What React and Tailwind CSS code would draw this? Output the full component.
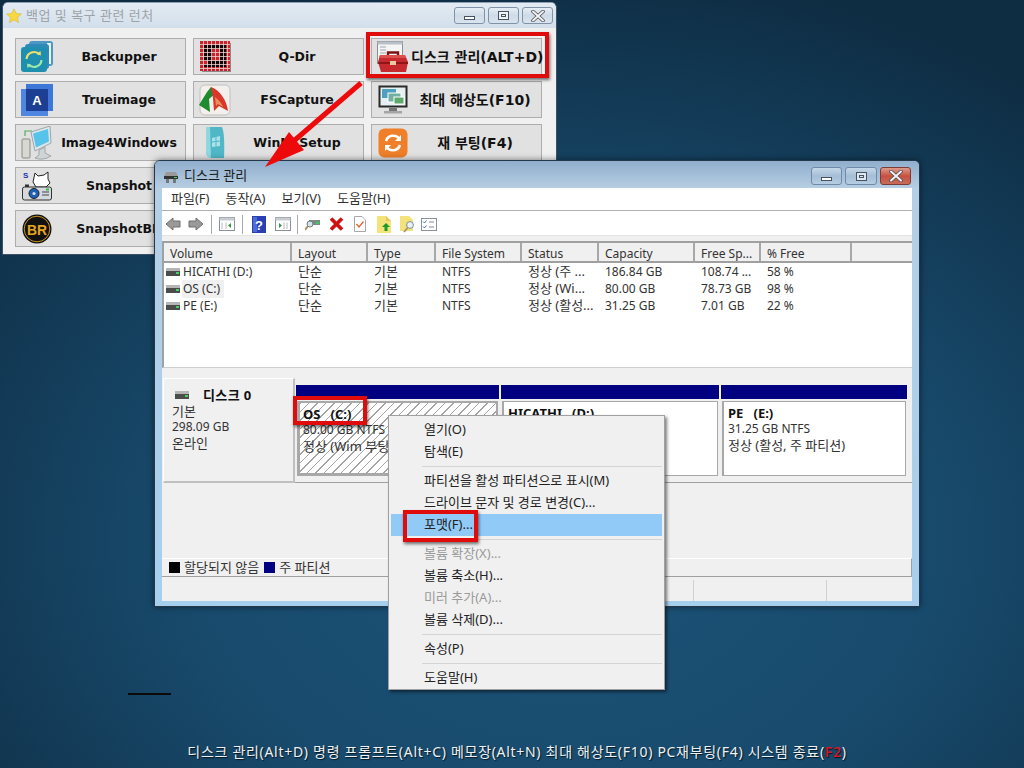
import React from "react";

const sys = "font-['Noto_Sans','Noto_Sans_CJK_KR',sans-serif]";
const hasKo = (s) => /[가-힣]/.test(s);

function Ctl({ kind, w = "w-[31px]", h = "h-[18px]", red = false, pale = false }) {
  const tone = red
    ? "border-[#7d3b35] bg-gradient-to-b from-[#dc9a8e] via-[#c8503f] to-[#c66b58]"
    : pale
    ? "border-[#7f93a8] bg-gradient-to-b from-[#e6eef5] via-[#cfdbe7] to-[#d9e4ee]"
    : "border-[#6f8aa6] bg-gradient-to-b from-[#c6d8e9] via-[#a5bed6] to-[#b5cde2]";
  return (
    <div className={`${w} ${h} rounded-[3px] border flex items-center justify-center ${tone}`}>
      {kind === "min" && <div className="w-[11px] h-[4px] mt-[5px] border border-[#46525e] bg-white" />}
      {kind === "max" && <div className="w-[11px] h-[9px] border-[1.5px] border-[#46525e] bg-white/60 flex items-center justify-center"><div className="w-[5px] h-[3px] border border-[#46525e]" /></div>}
      {kind === "close" && (
        <svg width="14" height="12" viewBox="0 0 14 12">
          <path d="M2 1.5 L12 10.5 M12 1.5 L2 10.5" stroke="#4a4d55" strokeWidth="3.6" strokeLinecap="round" />
          <path d="M2 1.5 L12 10.5 M12 1.5 L2 10.5" stroke="#f2f2f2" strokeWidth="2" strokeLinecap="round" />
        </svg>
      )}
    </div>
  );
}

const Icons = {
  backupper: (
    <svg width="34" height="32" viewBox="0 0 34 32">
      <rect x="9" y="0" width="24" height="25" rx="3" fill="#4d97c6" />
      <rect x="27" y="2" width="4" height="21" fill="#e9f3f8" />
      <rect x="5" y="3" width="24" height="25" rx="3" fill="#2f8ab8" />
      <rect x="1" y="6" width="26" height="25" rx="3" fill="#1f8fb0" />
      <path d="M6.5 18 a7.5 7.5 0 0 1 13 -4.5" fill="none" stroke="#e9e06f" strokeWidth="2.2" />
      <path d="M21 14.5 L20.5 10 L16.5 13 Z" fill="#e9e06f" />
      <path d="M21.5 19 a7.5 7.5 0 0 1 -13 4.5" fill="none" stroke="#9fe8a8" strokeWidth="2.2" />
      <path d="M7 22.5 L7.5 27 L11.5 24 Z" fill="#9fe8a8" />
    </svg>
  ),
  qdir: (
    <svg width="31" height="31" viewBox="0 0 31 31">
      <rect x="2" y="2" width="29" height="29" fill="#8a8a8a" />
      <rect width="30" height="30" fill="#c8222a" />
      <path fillRule="evenodd" d="M4 4H26V26H4Z M12 8V20H20V8Z" fill="#120404" />
      <rect x="4" y="20" width="4" height="3" fill="#c8222a" />
      <path d="M0 3.5H30M0 7.5H30M0 11.5H30M0 15.5H30M0 19.5H30M0 23.5H30M0 27.5H30M3.5 0V30M7.5 0V30M11.5 0V30M15.5 0V30M19.5 0V30M23.5 0V30M27.5 0V30" stroke="#f0d4d4" strokeWidth="0.8" />
    </svg>
  ),
  true: (
    <svg width="32" height="32" viewBox="0 0 32 32">
      <rect x="5" y="0" width="27" height="27" fill="#3d78d8" />
      <rect x="0" y="5" width="27" height="27" fill="#4f86e2" />
      <rect x="5" y="5" width="22" height="22" fill="#1c3f94" />
      <text x="16" y="21" fontSize="13" fontWeight="700" fill="#fff" textAnchor="middle" fontFamily="Liberation Sans">A</text>
    </svg>
  ),
  fs: (
    <svg width="32" height="32" viewBox="0 0 32 32">
      <rect x="1" y="1" width="30" height="30" rx="5" fill="#f2efec" stroke="#c4c0bc" />
      <path d="M0 21 L8 8 L12 3 L17 9 L10 15 L11 28 Z" fill="#1f8a2e" />
      <path d="M12 3 C 21 6 28 17 29 27 L20 22 L15 27 L14 14 Z" fill="#d8372a" />
      <path d="M16 13 C 20 16 23 20 24 23 L19 20 L17 22 Z" fill="#eb8d5b" />
    </svg>
  ),
  i4w: (
    <svg width="32" height="34" viewBox="0 0 32 34">
      <rect x="1" y="13" width="8" height="19" rx="1" fill="#d8d8d2" stroke="#8a8a84" />
      <path d="M4 10 L4 5 L11 5" fill="none" stroke="#5aa95a" strokeWidth="1.2" />
      <path d="M10 6 L29 0 L30 17 L14 25 Z" fill="#dfe6ea" stroke="#9aa6ac" />
      <path d="M12 7.5 L27 3 L28 15.5 L15 21.5 Z" fill="#55c3ea" />
      <path d="M18 24 L24 21 L24 27 L30 30 Q22 35 14 32 L18 29Z" fill="#cfd4d6" stroke="#a0a6a8" />
    </svg>
  ),
  nt: (
    <svg width="22" height="33" viewBox="0 0 22 33">
      <path d="M2 1 H18 Q21 8 20 32 L8 32 Q2 31 2 26 Z" fill="#4fb7c6" />
      <path d="M2 1 H6 L7 32 Q2 31 2 26 Z" fill="#8fd7df" />
      <path d="M8 12 L16 10 L16 20 L8 21 Z" fill="#a9e2e8" />
      <path d="M12 10.5V20.5M8 16L16 15" stroke="#4fb7c6" />
    </svg>
  ),
  snap: (
    <svg width="30" height="30" viewBox="0 0 30 30">
      <text x="1" y="7" fontSize="8" fontWeight="700" fill="#1a2fb0" fontFamily="Liberation Sans">S</text>
      <path d="M13 2 L16 5 L22 4 L26 1 L26 8 L28 12 L24 16 L14 16 L11 11 Z" fill="#fff" stroke="#222" />
      <rect x="0.5" y="16" width="29" height="13" rx="2" fill="#d5d8dc" stroke="#333" />
      <circle cx="12" cy="22.5" r="5" fill="#1e5fb8" stroke="#222" />
      <circle cx="12" cy="22.5" r="1.6" fill="#ddd" />
      <path d="M20 21H27M20 24H27" stroke="#444" />
      <rect x="24" y="17.5" width="3" height="2" fill="#32c040" />
      <rect x="3" y="13.5" width="4" height="2.5" fill="#333" />
    </svg>
  ),
  br: (
    <svg width="30" height="30" viewBox="0 0 30 30">
      <circle cx="15" cy="15" r="14.5" fill="#111" />
      <circle cx="15" cy="15" r="12.8" fill="none" stroke="#c9921c" strokeWidth="1" />
      <text x="15" y="20.5" fontSize="15" fontWeight="700" fill="#e6a51f" textAnchor="middle" fontFamily="Liberation Sans" textLength="20" lengthAdjust="spacingAndGlyphs">BR</text>
    </svg>
  ),
  tool: (
    <svg width="32" height="32" viewBox="0 0 32 32">
      <rect x="0.5" y="0.5" width="25" height="22" fill="#f5f5f5" stroke="#8a8f96" />
      <rect x="0.5" y="0.5" width="25" height="3" fill="#b9c0c8" />
      <path d="M3 6H9M3 9H9M3 12H9M3 15H9" stroke="#a0a6ac" />
      <path d="M11 15V11.5H21V15" fill="none" stroke="#7a1414" strokeWidth="2.4" />
      <path d="M3 14 H28 L31 21 L29 31 H4 L1 21 Z" fill="#c62a2e" />
      <path d="M3 14 H28 L29 17 H2Z" fill="#dd5050" />
      <path d="M1 21 H31 V23 H1.4Z" fill="#8f1517" />
      <rect x="13" y="20" width="6" height="4" fill="#e8c9a0" />
    </svg>
  ),
  res: (
    <svg width="30" height="29" viewBox="0 0 30 29">
      <rect x="0.5" y="0.5" width="29" height="22" fill="#2a2a2a" />
      <rect x="2.5" y="2.5" width="25" height="18" fill="#e5f0f3" />
      <rect x="4" y="4" width="14" height="9" fill="#4f9fc0" />
      <rect x="10" y="8" width="13" height="9" fill="#74b0a0" stroke="#fff" />
      <rect x="16" y="12" width="10" height="7" fill="#5faa6a" stroke="#fff" />
      <rect x="11" y="23" width="8" height="3" fill="#777" />
      <rect x="6" y="26" width="18" height="2.5" fill="#a5a5a5" />
    </svg>
  ),
  reboot: (
    <svg width="30" height="30" viewBox="0 0 30 30">
      <rect x="0.5" y="0.5" width="29" height="29" rx="6" fill="#ef7f28" />
      <path d="M8 13 a7.5 7.5 0 0 1 13 -2.5" fill="none" stroke="#fff" strokeWidth="2.6" />
      <path d="M23 7 V13 H17 Z" fill="#fff" />
      <path d="M22 17 a7.5 7.5 0 0 1 -13 2.5" fill="none" stroke="#fff" strokeWidth="2.6" />
      <path d="M7 23 V17 H13 Z" fill="#fff" />
    </svg>
  ),
  star: (
    <svg width="16" height="16" viewBox="0 0 16 16">
      <path d="M8 .8 L10.2 5.4 L15.4 6 L11.5 9.4 L12.6 14.6 L8 12 L3.4 14.6 L4.5 9.4 L.6 6 L5.8 5.4 Z" fill="#f7d93f" stroke="#d9b645" strokeWidth=".6" />
    </svg>
  ),
};

function Btn({ icon, label }) {
  return (
    <div className="h-[37px] min-w-0 flex items-center border border-[#adadad] bg-[#e1e1e1]">
      <div className="w-[39px] shrink-0 flex items-center justify-center pl-[3px]">{icon}</div>
      <div className={`flex-1 pr-[2px] pt-[2px] text-center whitespace-nowrap font-['DejaVu_Sans','Noto_Sans_CJK_KR',sans-serif] font-semibold ${hasKo(label) ? "text-[14px]" : "text-[12.5px]"} text-[#111]`}>{label}</div>
    </div>
  );
}

function Launcher() {
  return (
    <div className="absolute left-[2px] top-[2px] w-[555px] h-[253px] rounded-t-[6px] border border-[#3c5068] border-t-[#8da0b5] bg-[#f0f0f0] overflow-hidden">
      <div className="h-[25px] flex items-center pl-[3px] pr-[3px] bg-gradient-to-b from-[#e3ebf3] to-[#d2dfeb]">
        {Icons.star}
        <span className={`ml-[4px] text-[13px] text-[#9ea3a8] tracking-[0.5px] ${sys}`}>백업 및 복구 관련 런처</span>
        <div className="ml-auto flex gap-[3px]">
          <Ctl kind="min" pale h="h-[17px]" />
          <Ctl kind="max" pale h="h-[17px]" />
          <Ctl kind="close" pale h="h-[17px]" />
        </div>
      </div>
      <div className="grid grid-cols-[171px_171px_171px] gap-x-[7px] gap-y-[6px] pl-[12px] pt-[10px]">
        <Btn icon={Icons.backupper} label="Backupper" />
        <Btn icon={Icons.qdir} label="Q-Dir" />
        <Btn icon={Icons.tool} label="디스크 관리(ALT+D)" />
        <Btn icon={Icons.true} label="Trueimage" />
        <Btn icon={Icons.fs} label="FSCapture" />
        <Btn icon={Icons.res} label="최대 해상도(F10)" />
        <Btn icon={Icons.i4w} label="Image4Windows" />
        <Btn icon={Icons.nt} label="WinNTSetup" />
        <Btn icon={Icons.reboot} label="재 부팅(F4)" />
        <Btn icon={Icons.snap} label="Snapshot" />
        <div />
        <div />
        <Btn icon={Icons.br} label="SnapshotBR" />
      </div>
    </div>
  );
}

function Drive({ w = 14 }) {
  return (
    <svg width={w} height="8" viewBox="0 0 14 8" className="shrink-0">
      <rect x="0" y="0" width="14" height="3" fill="#b5b5b5" />
      <rect x="0" y="3" width="14" height="5" fill="#4a4d4a" />
      <rect x="10" y="4" width="3" height="2" fill="#45d060" />
    </svg>
  );
}

const TB = {
  back: (
    <svg width="16" height="14" viewBox="0 0 16 14"><path d="M1 7 L8 1 V4 H15 V10 H8 V13 Z" fill="#9a9a9a" stroke="#6f6f6f" /></svg>
  ),
  fwd: (
    <svg width="16" height="14" viewBox="0 0 16 14"><path d="M15 7 L8 1 V4 H1 V10 H8 V13 Z" fill="#9a9a9a" stroke="#6f6f6f" /></svg>
  ),
  tree: (
    <svg width="16" height="14" viewBox="0 0 16 14"><rect x=".5" y=".5" width="15" height="13" fill="#fff" stroke="#8a9198" /><rect x=".5" y=".5" width="15" height="3" fill="#c7ccd2" /><path d="M3 5.5V12M7 5.5V12" stroke="#b8b8b8" /><path d="M12 6 L9 8.5 L12 11 Z" fill="#2e9a4a" /></svg>
  ),
  help: (
    <svg width="14" height="17" viewBox="0 0 14 17"><rect width="14" height="17" fill="#2a3fb4" /><rect x="1" y="1" width="4" height="15" fill="#4c6bd6" /><text x="7" y="13.5" fontSize="13" fontWeight="700" fill="#fff" textAnchor="middle" fontFamily="Liberation Sans">?</text></svg>
  ),
  action: (
    <svg width="16" height="14" viewBox="0 0 16 14"><rect x=".5" y=".5" width="15" height="13" fill="#fff" stroke="#8a9198" /><rect x=".5" y=".5" width="15" height="3" fill="#c7ccd2" /><path d="M9 5.5V12M12 5.5V12" stroke="#b8b8b8" /><path d="M4 6 L7 8.5 L4 11 Z" fill="#2e9a4a" /></svg>
  ),
  conn: (
    <svg width="16" height="14" viewBox="0 0 16 14"><path d="M4 3 H15 V8 H4Z" fill="#7c8a86" /><rect x="11" y="5" width="3" height="2" fill="#36d05a" /><circle cx="5" cy="7" r="3" fill="#cfe6ee" stroke="#6f7a7a" /><path d="M3 9 L0 13" stroke="#a88e5a" strokeWidth="2" /></svg>
  ),
  x: (
    <svg width="15" height="14" viewBox="0 0 15 14"><path d="M2 1.5 L13 12.5 M13 1.5 L2 12.5" stroke="#cc1212" strokeWidth="3.6" /></svg>
  ),
  doc: (
    <svg width="12" height="16" viewBox="0 0 12 16"><path d="M.5 .5 H8 L11.5 4 V15.5 H.5 Z" fill="#fff" stroke="#a8a8a8" /><path d="M2.5 8 L5 11 L9.5 5.5" fill="none" stroke="#e0632f" strokeWidth="1.3" /></svg>
  ),
  up: (
    <svg width="14" height="17" viewBox="0 0 14 17"><path d="M0 0 H9 L14 5 V17 H0Z" fill="#f4e27a" /><path d="M9 0 L14 5 H9Z" fill="#e4c95a" /><path d="M9 7 L13 11 H10.5 V15 H7.5 V11 H5Z" fill="#1b9a2c" /></svg>
  ),
  find: (
    <svg width="15" height="17" viewBox="0 0 15 17"><path d="M0 0 H9 L13 4 V15 H0Z" fill="#f4e27a" /><circle cx="10" cy="9" r="3.4" fill="#e9f3fa" stroke="#7b8a96" /><path d="M7.5 12 L4 16" stroke="#a88e5a" strokeWidth="1.6" /></svg>
  ),
  list: (
    <svg width="16" height="13" viewBox="0 0 16 13"><rect x=".5" y=".5" width="15" height="12" fill="#fff" stroke="#8a9198" /><path d="M2 3.5 L3.5 5 L5.5 2.5M2 8.5 L3.5 10 L5.5 7.5" fill="none" stroke="#3f7fc0" /><path d="M8 4H13M8 9H13" stroke="#8a8a8a" /></svg>
  ),
};

const Sep = () => <div className="w-px h-[19px] bg-[#a9a9a9]" />;

const cols = [
  ["Volume", "w-[128px]"],
  ["Layout", "w-[76px]"],
  ["Type", "w-[68px]"],
  ["File System", "w-[86px]"],
  ["Status", "w-[77px]"],
  ["Capacity", "w-[96px]"],
  ["Free Sp...", "w-[66px]"],
  ["% Free", "w-[91px]"],
];

const rows = [
  ["HICATHI (D:)", "단순", "기본", "NTFS", "정상 (주 ...", "186.84 GB", "108.74 ...", "58 %"],
  ["OS (C:)", "단순", "기본", "NTFS", "정상 (Wi...", "80.00 GB", "78.73 GB", "98 %"],
  ["PE (E:)", "단순", "기본", "NTFS", "정상 (활성...", "31.25 GB", "7.01 GB", "22 %"],
];

function Table() {
  return (
    <div className="h-[127px] shrink-0 border-t-2 border-l-2 border-[#a0a0a0] bg-white border-b border-b-[#d0d0d0]">
      <div className="h-[20px] flex bg-[#f0f0f0] border-b-2 border-[#a0a0a0]">
        {cols.map(([t, w]) => (
          <div key={t} className={`${w} shrink-0 pl-[6px] text-[12px] leading-[22px] text-[#333] border-r-2 border-[#a8a8a8] whitespace-nowrap`}>{t}</div>
        ))}
        <div className="flex-1" />
      </div>
      {rows.map((r, i) => (
        <div key={i} className="h-[17px] flex items-center text-[#333] whitespace-nowrap">
          {r.map((c, j) => (
            <div key={j} className={`${cols[j][1]} shrink-0 ${hasKo(c) ? "text-[13px]" : "text-[12px]"} ${j === 0 ? "pl-[2px] flex items-center" : "pl-[6px]"}`}>
              {j === 0 && <Drive />}
              {j === 0 ? <span className={`ml-[2px] px-[1px] ${i === 1 ? "bg-[#f0f0f0] pr-[4px]" : ""}`}>{c}</span> : c}
            </div>
          ))}
        </div>
      ))}
    </div>
  );
}

function Part({ w, name, size, status, hatch }) {
  return (
    <div className={`${w} shrink-0 h-[98px] flex flex-col`}>
      <div className="h-[14px] bg-[#000080] mb-[2px]" />
      <div className={`h-[75px] ${hatch ? "border-[3px] border-[#a8a8a8] border-t-[2px] border-r-[2px] bg-[repeating-linear-gradient(135deg,#a4a4a4_0,#a4a4a4_1px,#ffffff_1px,#ffffff_6px)] pl-[3px]" : "border border-[#a8a8a8] border-l-2 bg-white pl-[4px]"} mx-[1px] pt-[3px] leading-[16px] text-[12px] text-[#333] whitespace-nowrap overflow-hidden`}>
        <div className="font-bold text-[13px] text-[#111] whitespace-pre">{name}</div>
        {size && <div>{size}</div>}
        {status && <div className="text-[13px]">{status}</div>}
      </div>
    </div>
  );
}

function DiskPanel() {
  return (
    <div className="flex-1 flex flex-col min-h-0 bg-[#f0f0f0]">
      <div className="h-[178px] flex items-start pl-[1px]">
        <div className="w-[132px] h-[105px] bg-[#f0f0f0] border-r-2 border-b-2 border-[#c0c0c0] border-t border-t-white border-l border-l-white shrink-0 pl-[8px] pt-[8px] text-[12px] leading-[16px] text-[#333]">
          <div className="flex items-center pl-[3px] h-[16px]">
            <Drive />
            <span className="ml-[14px] text-[13px] font-bold text-[#111] tracking-[0.4px]">디스크 0</span>
          </div>
          <div className="text-[13px]">기본</div>
          <div>298.09 GB</div>
          <div className="text-[13px]">온라인</div>
        </div>
        <div className="flex-1 h-[105px] border-b border-[#a0a0a0] flex pt-[7px] pl-[1px] gap-[2px]">
          <Part w="w-[203px]" name="OS   (C:)" size="80.00 GB NTFS" status="정상 (Wim 부팅" hatch />
          <Part w="w-[218px]" name="HICATHI   (D:)" />
          <Part w="w-[186px]" name="PE   (E:)" size="31.25 GB NTFS" status="정상 (활성, 주 파티션)" />
        </div>
      </div>
      <div className="flex-1" />
      <div className="h-[19px] flex items-center border-t border-t-white border-b border-b-[#a0a0a0] border-r border-r-[#a0a0a0] pl-[7px] text-[13px] text-[#333]">
        <div className="w-[11px] h-[11px] bg-black mr-[4px]" />
        <span>할당되지 않음</span>
        <div className="w-[11px] h-[11px] bg-[#000080] ml-[5px] mr-[4px]" />
        <span>주 파티션</span>
      </div>
    </div>
  );
}

function DiskWindow() {
  return (
    <div className={`absolute left-[154px] top-[160px] w-[766px] h-[447px] rounded-t-[6px] border border-[#24384c] bg-gradient-to-b from-[#b5cfe5] to-[#a6cfee] shadow-[0_0_6px_rgba(0,0,0,0.5)] flex flex-col px-[7px] pb-[5px] overflow-hidden ${sys}`}>
      <div className="h-[27px] shrink-0 -mx-[7px] pl-[8px] pr-[8px] pt-[3px] flex items-center text-[13px] text-[#1a1a1a] bg-gradient-to-b from-[#90aecd] to-[#b6cee3]">
        <svg width="16" height="14" viewBox="0 0 16 14" className="shrink-0">
          <path d="M3 3 H13 L15 7 H1 Z" fill="#9a9a9a" />
          <rect x="1" y="7" width="14" height="3" fill="#333" />
          <rect x="3" y="10" width="3" height="4" fill="#777" />
          <rect x="10" y="10" width="3" height="4" fill="#777" />
          <rect x="11" y="8" width="3" height="1" fill="#45d060" />
        </svg>
        <span className="ml-[5px]">디스크 관리</span>
        <div className="ml-auto flex gap-[3px]">
          <Ctl kind="min" />
          <Ctl kind="max" w="w-[32px]" />
          <Ctl kind="close" red />
        </div>
      </div>
      <div className="flex-1 min-h-0 flex flex-col bg-[#f0f0f0]">
        <div className="h-[23px] shrink-0 bg-white border-b border-[#b0b0b0] flex items-center pl-[9px] gap-[16px] text-[13px] text-[#333]">
          <span>파일(F)</span><span>동작(A)</span><span>보기(V)</span><span>도움말(H)</span>
        </div>
        <div className="h-[24px] shrink-0 bg-white flex items-center pl-[3px] pt-[2px]">
          <div className="w-[23px]">{TB.back}</div>
          <div className="w-[23px]">{TB.fwd}</div>
          <Sep />
          <div className="w-[30px] pl-[7px]">{TB.tree}</div>
          <Sep />
          <div className="w-[24px] pl-[9px] mr-[8px]">{TB.help}</div>
          <div className="w-[22px]">{TB.action}</div>
          <Sep />
          <div className="w-[23px] pl-[7px] mr-[8px]">{TB.conn}</div>
          <div className="w-[25px]">{TB.x}</div>
          <div className="w-[23px]">{TB.doc}</div>
          <div className="w-[23px]">{TB.up}</div>
          <div className="w-[21px]">{TB.find}</div>
          <div className="w-[16px]">{TB.list}</div>
        </div>
        <div className="h-[6px] shrink-0 bg-[#f0f0f0] border-t border-[#e4e4e4]" />
        <Table />
        <div className="h-[10px] shrink-0 bg-[#f0f0f0]" />
        <DiskPanel />
        <div className="h-[24px] shrink-0 flex bg-[#f0f0f0] pt-[3px] text-[12px]">
          <div className="w-[532px] border-r border-[#d0d0d0]" />
          <div className="w-[133px] border-r border-[#d0d0d0]" />
          <div className="flex-1" />
        </div>
      </div>
    </div>
  );
}

function Item({ t, dim, hi }) {
  return (
    <div className={`h-[22px] ml-[2px] mr-[2px] pl-[33px] flex items-center whitespace-nowrap text-[13px] ${dim ? "text-[#9a9a9a]" : "text-[#222]"} ${hi ? "bg-[#91c9f7]" : ""}`}>{t}</div>
  );
}

const MSep = () => <div className="h-px ml-[33px] mr-[2px] my-[3px] bg-[#d4d4d4]" />;

function Menu() {
  return (
    <div className={`absolute left-[388px] top-[415px] w-[277px] h-[275px] border border-[#a0a0a0] bg-[#f0f0f0] pt-[3px] shadow-[2px_2px_3px_rgba(0,0,0,0.5)] ${sys}`}>
      <Item t="열기(O)" />
      <Item t="탐색(E)" />
      <MSep />
      <Item t="파티션을 활성 파티션으로 표시(M)" />
      <Item t="드라이브 문자 및 경로 변경(C)..." />
      <Item t="포맷(F)..." hi />
      <MSep />
      <Item t="볼륨 확장(X)..." dim />
      <Item t="볼륨 축소(H)..." />
      <Item t="미러 추가(A)..." dim />
      <Item t="볼륨 삭제(D)..." />
      <MSep />
      <Item t="속성(P)" />
      <MSep />
      <Item t="도움말(H)" />
    </div>
  );
}

const redBox = "absolute border-[4px] border-[#e00b0b] shadow-[1px_2px_3px_rgba(0,0,0,0.55)] pointer-events-none";

export default function App() {
  return (
    <div className="relative w-[1024px] h-[768px] overflow-hidden bg-[radial-gradient(ellipse_75%_75%_at_55%_70%,#1c5479_0%,#184a6c_50%,#0e2c42_100%)] flex items-end justify-center">
      <div className="pb-[6px] pl-[10px] text-[14px] tracking-[0.7px] text-[#eef2f5] whitespace-nowrap [text-shadow:1px_1px_1px_rgba(0,0,0,0.7)] font-['Noto_Sans','Noto_Sans_CJK_KR',sans-serif]">
        디스크 관리(Alt+D) 명령 프롬프트(Alt+C) 메모장(Alt+N) 최대 해상도(F10) PC재부팅(F4) 시스템 종료(<span className="text-[#d01828] font-semibold">F2</span>)
      </div>
      <div className="absolute left-[128px] top-[693px] w-[43px] h-[2px] bg-[#0a0a0a]" />
      <Launcher />
      <div className={`${redBox} left-[366px] top-[32px] w-[183px] h-[46px]`} />
      <DiskWindow />
      <Menu />
      <div className={`${redBox} left-[293px] top-[396px] w-[74px] h-[29px]`} />
      <div className={`${redBox} left-[403px] top-[510px] w-[75px] h-[32px]`} />
      <svg className="absolute left-0 top-0" width="1024" height="768" viewBox="0 0 1024 768">
        <path d="M361 83 L288 146" stroke="#ee0a0a" strokeWidth="5" />
        <path d="M265 167 L289 132 L304 150 Z" fill="#ee0a0a" />
      </svg>
    </div>
  );
}
